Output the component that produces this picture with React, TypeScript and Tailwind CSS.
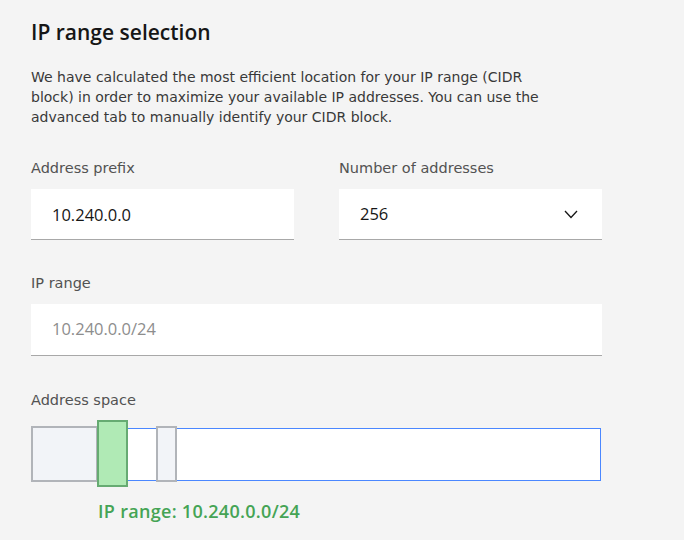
import { useState } from "react";

const font = { fontFamily: "'Open Sans', 'Noto Sans', sans-serif" };
const body = { fontFamily: "'DejaVu Sans', 'Open Sans', sans-serif" };

function FieldLabel({ children }: { children: React.ReactNode }) {
  return (
    <label
      className="mb-3 block text-[14.5px] leading-[18px] text-[#525252]"
      style={body}
    >
      {children}
    </label>
  );
}

function ChevronDown() {
  return (
    <svg width="14" height="9" viewBox="0 0 14 9" fill="none" aria-hidden="true">
      <polyline
        points="1,1 7,7.5 13,1"
        stroke="#161616"
        strokeWidth="1.3"
        fill="none"
      />
    </svg>
  );
}

export default function App() {
  const [prefix, setPrefix] = useState("10.240.0.0");

  return (
    <div
      className="min-h-[540px] w-[684px] bg-[#f4f4f4] px-[31px] pt-[18px] text-[#161616]"
      style={font}
    >
      <h2 className="text-[21px] font-semibold leading-[28px] text-[#161616]">
        IP range selection
      </h2>

      <p
        className="mt-[21px] text-[14px] leading-[20px] text-[#393939]"
        style={body}
      >
        We have calculated the most efficient location for your IP range (CIDR
        <br />
        block) in order to maximize your available IP addresses. You can use the
        <br />
        advanced tab to manually identify your CIDR block.
      </p>

      <div className="mt-[32px] grid w-[571px] grid-cols-2 gap-[45px]">
        <div>
          <FieldLabel>Address prefix</FieldLabel>
          <input
            value={prefix}
            onChange={(e) => setPrefix(e.target.value)}
            className="h-[51px] w-full border-b border-[#a8a8a8] bg-white px-[21px] text-[16.5px] text-[#161616] outline-none"
          />
        </div>
        <div>
          <FieldLabel>Number of addresses</FieldLabel>
          <div className="flex h-[51px] w-full items-center justify-between border-b border-[#a8a8a8] bg-white pl-[21px] pr-[24px] text-[16.5px] text-[#161616]">
            <span>256</span>
            <ChevronDown />
          </div>
        </div>
      </div>

      <div className="mt-[34px] w-[571px]">
        <FieldLabel>IP range</FieldLabel>
        <div className="flex h-[52px] w-full items-center border-b border-[#a8a8a8] bg-white px-[21px] text-[16.5px] text-[#8d8d8d]">
          10.240.0.0/24
        </div>
      </div>

      <div className="mt-[35px] w-[571px]">
        <label
          className="block text-[14.5px] leading-[18px] text-[#525252]"
          style={body}
        >
          Address space
        </label>

        <div className="relative mt-[11px] h-[67px] w-[571px]">
          <div className="absolute left-0 top-[8px] h-[53px] w-[570px] border border-[#4a87ff] bg-white" />
          <div className="absolute left-0 top-[6px] h-[56px] w-[67px] border-2 border-[#b1b4b9] bg-[#f2f4f8]" />
          <div className="absolute left-[125px] top-[6px] h-[56px] w-[21px] border-2 border-[#b1b4b9] bg-[#f2f4f8]" />
          <div className="absolute left-[66px] top-0 h-[67px] w-[31px] border-2 border-[#66ab72] bg-[#b0eab5]" />
        </div>

        <p className="ml-[67px] mt-[13px] text-[18px] font-semibold leading-[22px] tracking-[0.3px] text-[#45a455]">
          IP range: 10.240.0.0/24
        </p>
      </div>
    </div>
  );
}
